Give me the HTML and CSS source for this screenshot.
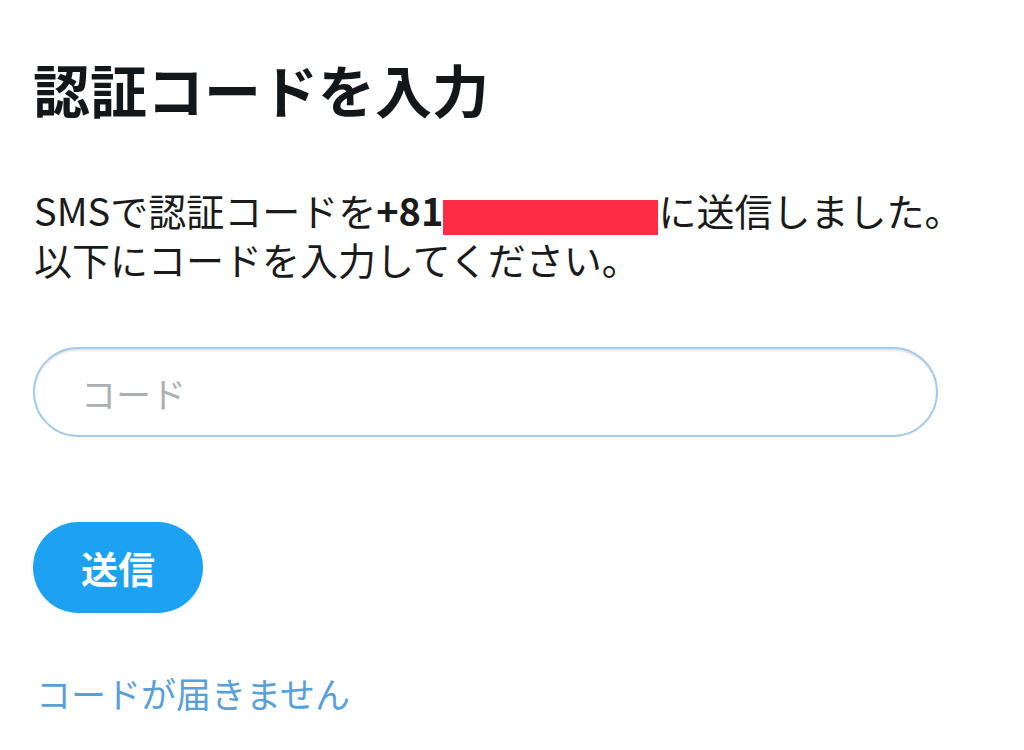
FILE: index.html
```html
<!DOCTYPE html>
<html lang="ja">
<head>
<meta charset="utf-8">
<link rel="stylesheet" href="styles.css">
</head>
<body>
<main class="page">
  <h1 class="title">認証コードを入力</h1>
  <p class="lead">SMSで認証コードを<b class="num">+81</b><span class="redact"></span>に送信しました。<br>以下にコードを入力してください。</p>
  <input class="code" type="text" placeholder="コード">
  <button class="send" type="button">送信</button>
  <a class="help" href="#">コードが届きません</a>
</main>
</body>
</html>
```

FILE: styles.css
```css
html, body {
  margin: 0;
  padding: 0;
  background: #ffffff;
}
body {
  font-family: "Noto Sans CJK JP", "Noto Sans", sans-serif;
  color: #14171a;
}
.page {
  display: flex;
  flex-direction: column;
  align-items: flex-start;
  padding: 60px 0 0 33px;
}
.title {
  margin: 0;
  font-size: 57px;
  line-height: 56px;
  font-weight: 700;
  color: #14171a;
}
.lead {
  margin: 70px 0 0 1px;
  font-size: 38px;
  line-height: 48px;
  color: #1a1a1a;
}
.num {
  font-weight: 700;
}
.redact {
  display: inline-block;
  width: 215px;
  height: 35px;
  background: #fe2c44;
  vertical-align: -9px;
}
.code {
  box-sizing: border-box;
  margin: 64px 0 0 0;
  width: 905px;
  height: 90px;
  border: 2px solid #a6cbe8;
  border-radius: 45px;
  padding: 0 0 0 46px;
  font-family: inherit;
  font-size: 35px;
  color: #14171a;
  background: #fff;
  box-shadow: inset 0 3px 3px -2px rgba(120, 130, 140, 0.35);
  outline: none;
}
.code::placeholder {
  color: #acb0b5;
}
.send {
  margin: 85px 0 0 0;
  width: 170px;
  height: 91px;
  border: none;
  border-radius: 46px;
  background: #1da1f2;
  color: #ffffff;
  font-family: inherit;
  font-size: 37px;
  font-weight: 700;
  padding: 0;
}
.help {
  margin: 62px 0 0 3px;
  font-size: 35px;
  line-height: 36px;
  color: #5a9fd6;
  text-decoration: none;
}
```
